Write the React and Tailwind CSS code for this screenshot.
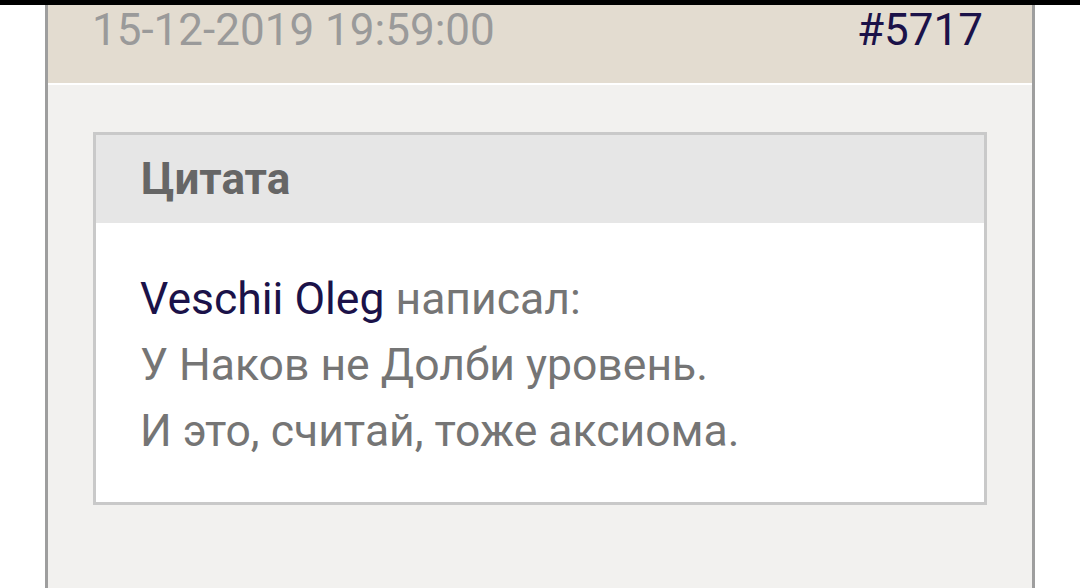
import React from 'react';

const App = () => {
    return (
        <div className="w-[1080px] h-[588px] overflow-hidden bg-white flex flex-col" style={{ fontFamily: 'Roboto, "Noto Sans", sans-serif' }}>
            <div className="h-[5px] bg-black shrink-0"></div>
            <div className="flex-1 ml-[45px] mr-[45px] border-x-[3px] border-[#9e9e9e] bg-[#f2f1ef] flex flex-col">
                {/* Post header */}
                <div className="h-[80px] bg-[#e3dcd0] flex items-start justify-between pl-[44px] pr-[49px] border-b-2 border-white shrink-0">
                    <span className="mt-[3px] text-[44px] leading-none text-[#9a9a9a]">15-12-2019 19:59:00</span>
                    <span className="mt-[3px] text-[44px] leading-none text-[#1b1249]">#5717</span>
                </div>

                {/* Quote */}
                <div className="mt-[47px] mx-[45px] border-[3px] border-[#c9c9c9] bg-white">
                    <div className="h-[88px] bg-[#e6e6e6] flex items-center pl-[45px]">
                        <span className="text-[44px] font-bold text-[#666666] leading-none">Цитата</span>
                    </div>
                    <div className="pl-[44px] pt-[43px] pb-[38px] text-[44.5px] leading-[66px] text-[#757575]">
                        <p><span className="text-[#1b1249]">Veschii Oleg</span> написал:</p>
                        <p>У Наков не Долби уровень.</p>
                        <p>И это, считай, тоже аксиома.</p>
                    </div>
                </div>
            </div>
        </div>
    );
};

export default App;
